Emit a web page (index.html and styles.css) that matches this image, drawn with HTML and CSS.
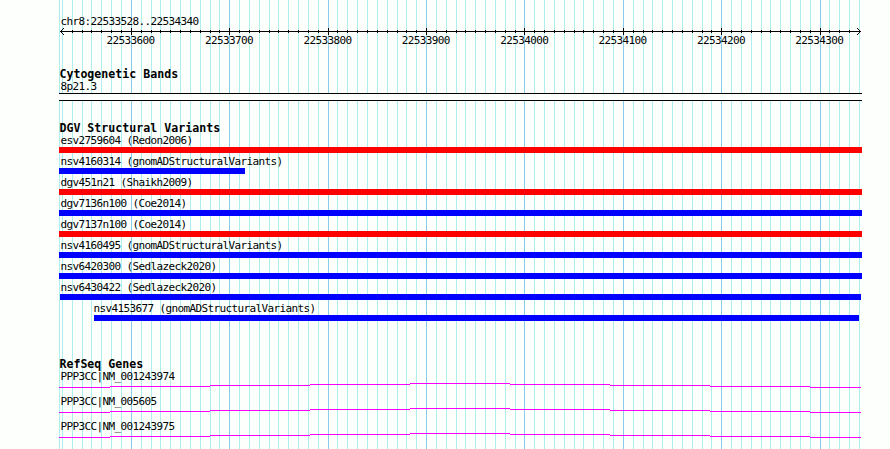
FILE: index.html
```
<!DOCTYPE html>
<html lang="en">
<head>
    <meta charset="UTF-8">
    <title>chr8:22533528..22534340</title>
    <link rel="stylesheet" href="styles.css">
</head>
<body>
    <div class="browser">
        <svg class="grid" id="grid" width="890" height="449" shape-rendering="crispEdges"></svg>

        <div class="panel">
            <div class="region">chr8:22533528..22534340</div>
            <svg class="ruler" id="ruler" width="803" height="9" shape-rendering="crispEdges">
                <rect x="1" y="4" width="801" height="1"/>
                <path d="M2 3h1v1h-1zM3 2h1v1h-1zM4 1h1v1h-1zM2 5h1v1h-1zM3 6h1v1h-1zM4 7h1v1h-1z"/>
                <path d="M800 3h1v1h-1zM799 2h1v1h-1zM798 1h1v1h-1zM800 5h1v1h-1zM799 6h1v1h-1zM798 7h1v1h-1z"/>
            </svg>
            <div class="positions">
                <span>22533600</span><span>22533700</span><span>22533800</span><span>22533900</span><span>22534000</span><span>22534100</span><span>22534200</span><span>22534300</span>
            </div>

            <div class="track cyto">
                <h2>Cytogenetic Bands</h2>
                <div class="label">8p21.3</div>
                <div class="band"></div>
            </div>

            <div class="track variants">
                <h2>DGV Structural Variants</h2>
                <div class="row"><div class="label">esv2759604 (Redon2006)</div><div class="bar loss"></div></div>
                <div class="row"><div class="label">nsv4160314 (gnomADStructuralVariants)</div><div class="bar gain partial"></div></div>
                <div class="row"><div class="label">dgv451n21 (Shaikh2009)</div><div class="bar loss"></div></div>
                <div class="row"><div class="label">dgv7136n100 (Coe2014)</div><div class="bar gain"></div></div>
                <div class="row"><div class="label">dgv7137n100 (Coe2014)</div><div class="bar loss"></div></div>
                <div class="row"><div class="label">nsv4160495 (gnomADStructuralVariants)</div><div class="bar gain"></div></div>
                <div class="row"><div class="label">nsv6420300 (Sedlazeck2020)</div><div class="bar gain"></div></div>
                <div class="row"><div class="label">nsv6430422 (Sedlazeck2020)</div><div class="bar gain inner"></div></div>
                <div class="row shifted"><div class="label">nsv4153677 (gnomADStructuralVariants)</div><div class="bar gain"></div></div>
            </div>

            <div class="track genes">
                <h2>RefSeq Genes</h2>
                <div class="gene">
                    <div class="label">PPP3CC|NM_001243974</div>
                    <svg class="intron" width="803" height="5"><use href="#intron"/></svg>
                </div>
                <div class="gene">
                    <div class="label">PPP3CC|NM_005605</div>
                    <svg class="intron" width="803" height="5"><use href="#intron"/></svg>
                </div>
                <div class="gene">
                    <div class="label">PPP3CC|NM_001243975</div>
                    <svg class="intron" width="803" height="5"><use href="#intron"/></svg>
                </div>
            </div>
        </div>
    </div>

    <svg class="defs" width="0" height="0">
        <defs>
            <path id="intron" shape-rendering="crispEdges" d="M0 4h51v1h-51zM51 3h100v1h-100zM151 2h100v1h-100zM251 1h100v1h-100zM351 0h100v1h-100zM451 1h100v1h-100zM551 2h100v1h-100zM651 3h100v1h-100zM751 4h51v1h-51z"/>
        </defs>
    </svg>

    <script>
        const START = 22533528;
        const END = 22534340;
        const SCALE = 0.984;
        const LEFT = 59;

        function addRect(parent, x, y, height, className) {
            const rect = document.createElementNS('http://www.w3.org/2000/svg', 'rect');
            rect.setAttribute('x', x);
            rect.setAttribute('y', y);
            rect.setAttribute('width', 1);
            rect.setAttribute('height', height);
            rect.setAttribute('class', className);
            parent.appendChild(rect);
        }

        const grid = document.getElementById('grid');
        const ruler = document.getElementById('ruler');
        addRect(grid, LEFT, 0, 449, 'minor');

        // one line every 10 bp, a major one every 100 bp
        for (let pos = 22533530; pos <= END; pos += 10) {
            const x = Math.round((pos - START) * SCALE + 1);
            const major = pos % 100 === 0;
            addRect(grid, LEFT + x, 0, 449, major ? 'major' : 'minor');
            if (pos > 22533530 && pos < END) {
                addRect(ruler, x, major ? 1 : 3, major ? 7 : 3, 'tick');
            }
        }
    </script>
</body>
</html>
```
FILE: styles.css
```
* {
    margin: 0;
    padding: 0;
    box-sizing: border-box;
}

body {
    background: #fdfffc;
    color: #000;
    font-family: "DejaVu Sans Mono", "Liberation Mono", monospace;
    font-size: 11px;
    line-height: 13px;
    letter-spacing: -0.622px;
    overflow: hidden;
}

.browser {
    position: relative;
    width: 890px;
    height: 449px;
    overflow: hidden;
}

/* grid lines run behind every track */
.grid {
    position: absolute;
    top: 0;
    left: 0;
}

.minor {
    fill: #afeeee;
}

.major {
    fill: #87ceeb;
}

.panel {
    position: relative;
    width: 803px;
    margin-left: 59px;
    padding-top: 15px;
    white-space: nowrap;
}

.region,
.label {
    height: 13px;
    padding-left: 1.5px;
}

.ruler {
    display: block;
    margin-top: -1px;
}

.positions {
    display: flex;
    gap: 50.4px;
    height: 13px;
    margin-top: -2px;
    padding-left: 47.6px;
}

.positions span {
    width: 48px;
}

h2 {
    height: 13px;
    padding-left: 0.4px;
    font-size: 11.6px;
    font-weight: bold;
    letter-spacing: 0.015px;
    line-height: 13px;
}

.cyto {
    margin-top: 21px;
}

.cyto h2 {
    margin-bottom: -1px;
}

.band {
    height: 8px;
    background: #fdfffc;
    border-top: 1px solid #000;
    border-bottom: 1px solid #000;
}

.variants {
    margin-top: 21px;
}

.variants h2 {
    margin-bottom: -1px;
}

.row {
    height: 21px;
}

.bar {
    height: 6px;
}

.loss {
    background: #f00;
}

.gain {
    background: #00f;
}

.partial {
    width: 186px;
}

.inner {
    margin: 0 1px;
}

.shifted {
    padding: 0 3px 0 35px;
}

.shifted .label {
    padding-left: 0;
    margin-left: -0.5px;
}

.genes {
    margin-top: 35px;
}

.genes h2 {
    margin-bottom: -1px;
}

.gene {
    height: 25px;
}

.intron {
    display: block;
    fill: #f0f;
}

.defs {
    position: absolute;
}
```
